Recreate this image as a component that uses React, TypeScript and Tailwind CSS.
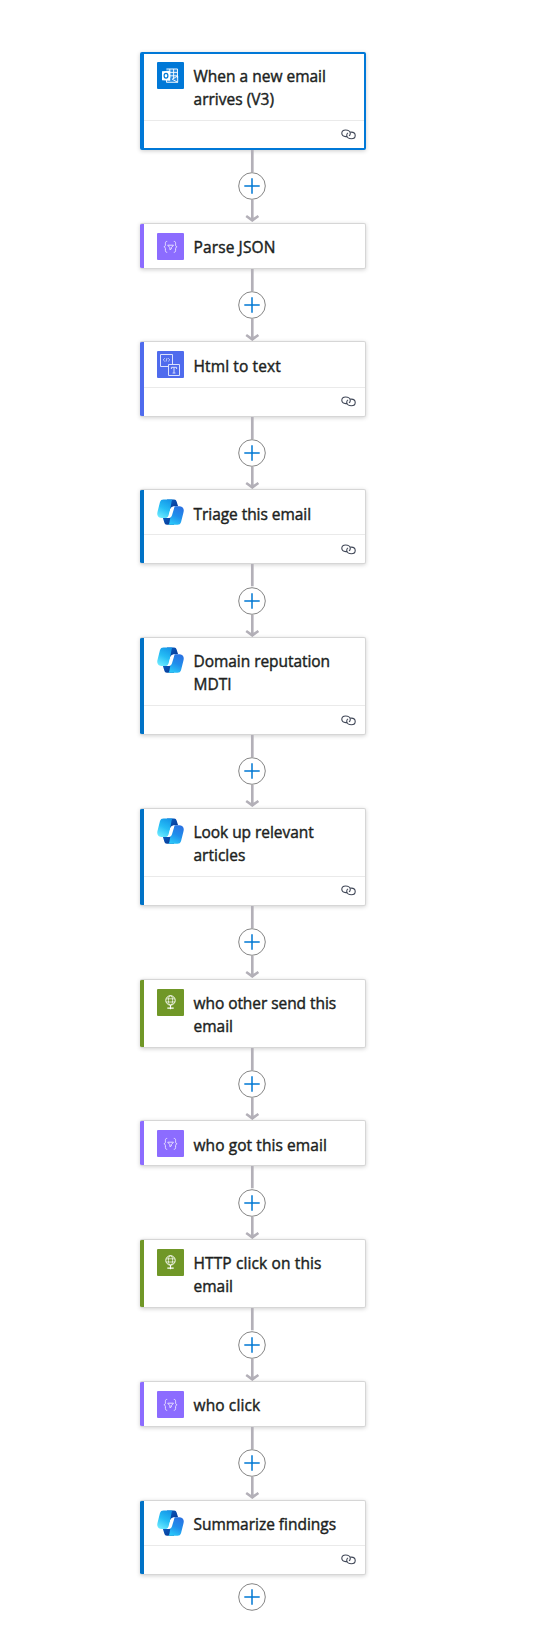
import { useId } from "react";

type Kind = "outlook" | "data" | "html" | "copilot" | "http";

interface Line {
  text: string;
  spacing: string;
}

interface Step {
  kind: Kind;
  lines: Line[];
  linked?: boolean;
  selected?: boolean;
}

const steps: Step[] = [
  { kind: "outlook", lines: [{ text: "When a new email", spacing: "tracking-[0px]" }, { text: "arrives (V3)", spacing: "tracking-[0.020px]" }], linked: true, selected: true },
  { kind: "data", lines: [{ text: "Parse JSON", spacing: "tracking-[0.120px]" }] },
  { kind: "html", lines: [{ text: "Html to text", spacing: "tracking-[0.120px]" }], linked: true },
  { kind: "copilot", lines: [{ text: "Triage this email", spacing: "tracking-[-0.050px]" }], linked: true },
  { kind: "copilot", lines: [{ text: "Domain reputation", spacing: "tracking-[-0.050px]" }, { text: "MDTI", spacing: "tracking-[0px]" }], linked: true },
  { kind: "copilot", lines: [{ text: "Look up relevant", spacing: "tracking-[-0.050px]" }, { text: "articles", spacing: "tracking-[0px]" }], linked: true },
  { kind: "http", lines: [{ text: "who other send this", spacing: "tracking-[-0.060px]" }, { text: "email", spacing: "tracking-[0px]" }] },
  { kind: "data", lines: [{ text: "who got this email", spacing: "tracking-[0.080px]" }] },
  { kind: "http", lines: [{ text: "HTTP click on this", spacing: "tracking-[0.120px]" }, { text: "email", spacing: "tracking-[0px]" }] },
  { kind: "data", lines: [{ text: "who click", spacing: "tracking-[0.120px]" }] },
  { kind: "copilot", lines: [{ text: "Summarize findings", spacing: "tracking-[-0.020px]" }], linked: true },
];

const accents: Record<Kind, string> = {
  outlook: "bg-[#0078d7]",
  data: "bg-[#8c6cff]",
  html: "bg-[#4f6bed]",
  copilot: "bg-[#0072c6]",
  http: "bg-[#709727]",
};

function OutlookIcon() {
  return (
    <svg viewBox="0 0 27 27" className="size-[27px]">
      <rect width="27" height="27" rx="1" fill="#0078d7" />
      <path d="M9 6.500h12v14H9z" fill="#2b8de0" />
      <path d="M9.500 7h11v9M12.800 7v9M16.600 7v10M9.500 10.400h11M12 13.800h8.500" fill="none" stroke="#fff" strokeWidth=".9" />
      <path d="M9.500 18v2.300h11.200V14l-5.500 3.200 5.500 3.100" fill="none" stroke="#fff" strokeWidth=".9" />
      <path d="M5 9.300l8.200-.6v10L5 18.300z" fill="#fff" />
      <ellipse cx="9" cy="13.800" rx="1.900" ry="2.400" fill="none" stroke="#0078d7" strokeWidth="1.200" />
    </svg>
  );
}

function DataIcon() {
  return (
    <svg viewBox="0 0 27 27" className="size-[27px]" fill="none" stroke="#e6deff" strokeWidth="1">
      <rect width="27" height="27" rx="1" fill="#8c6cff" stroke="none" />
      <path d="M10.200 8.400c-1.600 0-1.800.7-1.800 1.900v1.600c0 1.200-.4 1.700-1.500 1.900 1.100.2 1.500.8 1.500 1.900v1.700c0 1.200.3 1.900 1.800 1.900M16.800 8.400c1.600 0 1.800.7 1.800 1.900v1.600c0 1.200.4 1.700 1.500 1.900-1.100.2-1.500.8-1.500 1.900v1.700c0 1.200-.3 1.900-1.800 1.900" />
      <path d="M10.700 12.200h5.800l-2.200 2.500v1.300l-1.400.7v-2z" />
    </svg>
  );
}

function HtmlIcon() {
  return (
    <svg viewBox="0 0 27 27" className="size-[27px]" fill="none" stroke="#dbe1fc" strokeWidth="1">
      <rect width="27" height="27" rx="1" fill="#4f6bed" stroke="none" />
      <path d="M11 15.500H3.500v-12h12v9.500" />
      <path d="M7.800 7.200L6.200 8.800l1.600 1.600M11.200 7.200l1.600 1.600-1.600 1.600M10 7l-1 3.600" strokeWidth=".8" />
      <path d="M11.500 13.500h11v11h-11z" />
      <path d="M14.400 18v-1.700h5.200V18M17 16.300v5.600M15.600 22h2.800" strokeWidth="1" />
    </svg>
  );
}

function HttpIcon() {
  return (
    <svg viewBox="0 0 27 27" className="size-[27px]" fill="none" stroke="#fff" strokeWidth="1">
      <rect width="27" height="27" rx="1" fill="#709727" stroke="none" />
      <circle cx="13.500" cy="11.400" r="4.700" />
      <ellipse cx="13.500" cy="11.400" rx="2.100" ry="4.600" strokeWidth=".7" />
      <path d="M9.400 9.800h8.200M9.400 13h8.200" strokeWidth=".7" />
      <path d="M13.500 16v4.200M10.300 19.100h6.400" strokeWidth="1.100" />
    </svg>
  );
}

function CopilotIcon() {
  const id = useId();
  return (
    <svg viewBox="0 0 27 27" className="size-[27px]">
      <defs>
        <linearGradient id={`${id}l`} x1=".7" y1="0" x2=".25" y2="1">
          <stop offset="0" stopColor="#1596e8" />
          <stop offset=".5" stopColor="#25bdf5" />
          <stop offset="1" stopColor="#6ceaff" />
        </linearGradient>
        <linearGradient id={`${id}r`} x1=".7" y1="0" x2=".3" y2="1">
          <stop offset="0" stopColor="#2a72e2" />
          <stop offset=".5" stopColor="#208deb" />
          <stop offset="1" stopColor="#2ac8fa" />
        </linearGradient>
        <linearGradient id={`${id}d`} x1="0" y1="0" x2="1" y2="1">
          <stop offset="0" stopColor="#0a5fc4" />
          <stop offset="1" stopColor="#07358f" />
        </linearGradient>
      </defs>
      <path d="M10 .5h7c1.600 0 2.200.7 2.600 2l1.500 4.700h-3.400c-2.200 0-3.300 1-3.900 2.800L10 7z" fill={`url(#${id}d)`} />
      <path d="M17 25.700h-7c-1.600 0-2.200-.7-2.600-2L5.900 19h3.400c2.200 0 3.300-1 3.900-2.800l3.800 3z" fill={`url(#${id}d)`} />
      <path d="M15.800.5H6.500C4.600.5 3.600 1.300 3 3L.6 12.500C.2 14 .1 15 .5 16.300c.6 1.900 2 2.700 4.200 2.700h4.800c1.500 0 2.100-.7 2.500-2.200l2.200-12C14.600 2.700 14.700 1 15.800.5z" fill={`url(#${id}l)`} />
      <path d="M11.200 25.700h9.300c1.900 0 2.900-.8 3.500-2.500l2.400-9.500c.4-1.500.5-2.500.1-3.800-.6-1.900-2-2.700-4.200-2.700h-4.800c-1.500 0-2.100.7-2.500 2.200l-2.200 12c-.4 2.100-.5 3.800-1.600 4.300z" fill={`url(#${id}r)`} />
      <path d="M18.200 7.200c-2.700 0-4.100.8-4.800 2.800l-1.900 6.600c-.5 1.700-1.200 2.300-2.700 2.400h1.800c2.600 0 3.700-.8 4.400-2.800l1.900-6.300c.4-1.600.5-2.300 1.300-2.700z" fill="#fff" />
    </svg>
  );
}

function StepIcon({ kind }: { kind: Kind }) {
  if (kind === "outlook") return <OutlookIcon />;
  if (kind === "data") return <DataIcon />;
  if (kind === "html") return <HtmlIcon />;
  if (kind === "http") return <HttpIcon />;
  return <CopilotIcon />;
}

function LinkIcon() {
  return (
    <svg viewBox="0 0 15 11" className="h-[11px] w-[15px]" fill="none" stroke="#414858" strokeWidth="1.100">
      <path d="M6.200 7.600H4.700C2.200 7.600.8 6.200.8 4.300S2.300 1 4.600 1c2.500 0 4.700 1.400 4.700 3.500 0 1.100-.5 1.900-1.300 2.400" />
      <path d="M9.200 3.100h1.100c2.500 0 3.900 1.500 3.900 3.400s-1.500 3.300-3.800 3.300c-2.500 0-4.700-1.400-4.700-3.500 0-1.100.5-1.900 1.300-2.400" />
    </svg>
  );
}

function AddButton() {
  return (
    <button aria-label="Add step" className="block size-7 shrink-0">
      <svg viewBox="0 0 28 28" className="size-7" fill="none">
        <circle cx="14" cy="14" r="13.300" fill="#fff" stroke="#858585" />
        <path d="M14 6.300v15.400M6.300 14h15.400" stroke="#0078d4" strokeWidth="1.500" />
      </svg>
    </button>
  );
}

function Connector() {
  return (
    <div className="mr-[2px] flex h-[72.580px] flex-col items-center">
      <svg viewBox="0 0 16 22" className="h-[22.300px] w-4 shrink-0" preserveAspectRatio="none">
        <path d="M8.300 0v22" stroke="#b3b0b8" strokeWidth="2.700" />
      </svg>
      <AddButton />
      <svg viewBox="0 0 16 22" className="h-[22px] w-4 shrink-0" fill="none" stroke="#b3b0b8" strokeWidth="2.600">
        <path d="M8.300 0v20.500M2.200 16l6.100 4.300 6.100-4.300" />
      </svg>
    </div>
  );
}

function Card({ step }: { step: Step }) {
  const double = step.lines.length > 1;
  return (
    <div
      className={`flex w-[226px] overflow-hidden rounded-[2px] bg-white ${
        step.selected
          ? "border-2 border-[#0078d7] shadow-[0_1px_4px_rgba(0,0,0,0.2)]"
          : "border border-l-0 border-[#d6d6d6] shadow-[0_1px_4px_rgba(0,0,0,0.18)]"
      }`}
    >
      <div className={`shrink-0 ${step.selected ? "w-[2px]" : "w-[4px]"} ${accents[step.kind]}`} />
      <div className="min-w-0 flex-1">
        <div className={`flex pl-[13px] ${step.selected ? "h-[66px] pt-[8px]" : double ? "h-[67.200px] pt-[9px]" : "h-[44.200px] pt-[9px]"}`}>
          <div className="size-[27px] shrink-0"><StepIcon kind={step.kind} /></div>
          <div className="ml-[9.500px] mt-[3.300px] text-[15.500px] leading-[23px] font-medium whitespace-nowrap text-[#201f1e] [-webkit-text-stroke:0.420px_#201f1e]">
            {step.lines.map((line) => (
              <div key={line.text}><span className={line.spacing}>{line.text}</span></div>
            ))}
          </div>
        </div>
        {step.linked && (
          <div className={`flex items-center justify-end border-t border-[#eaeaea] ${step.selected ? "h-[28px] pr-[8px]" : "h-[29px] pr-[9px]"}`}>
            <LinkIcon />
          </div>
        )}
      </div>
    </div>
  );
}

export default function App() {
  return (
    <main className="flex h-[1633px] w-[541px] flex-col items-start bg-white pt-[52.100px] pl-[140px] font-['Open_Sans','Noto_Sans',sans-serif]">
      {steps.map((step, index) => (
        <div key={index} className="flex flex-col items-center">
          <Card step={step} />
          {index < steps.length - 1 && <Connector />}
        </div>
      ))}
      <div className="mt-[8px] ml-[98px]">
        <AddButton />
      </div>
    </main>
  );
}
